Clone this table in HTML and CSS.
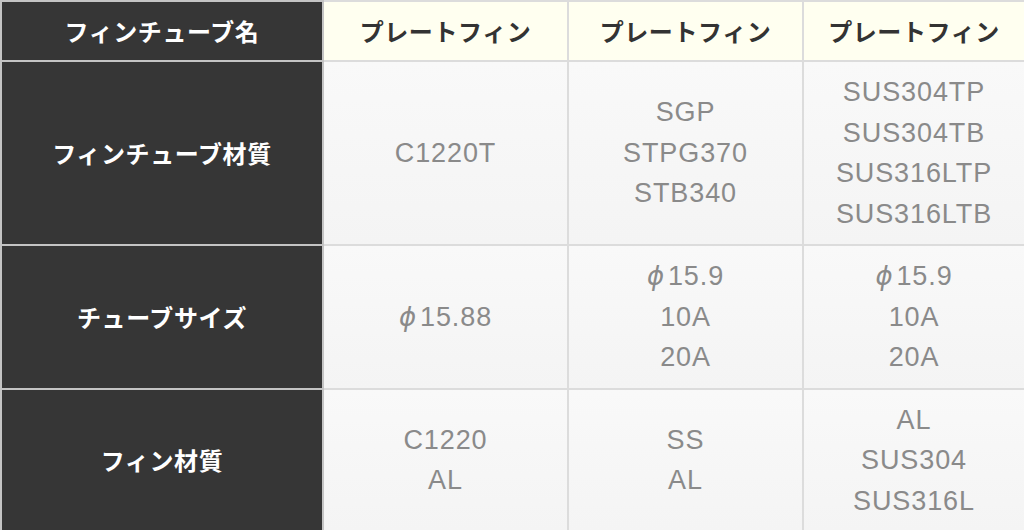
FILE: index.html
```html
<!DOCTYPE html>
<html lang="ja">
<head>
<meta charset="utf-8">
<title>フィンチューブ</title>
<link rel="stylesheet" href="styles.css">
</head>
<body>
<table class="spec">
  <colgroup>
    <col class="c1"><col class="c2"><col class="c3"><col class="c4">
  </colgroup>
  <thead>
    <tr class="head">
      <th class="label">フィンチューブ名</th>
      <th class="type">プレートフィン</th>
      <th class="type">プレートフィン</th>
      <th class="type">プレートフィン</th>
    </tr>
  </thead>
  <tbody>
    <tr>
      <th class="label">フィンチューブ材質</th>
      <td>C1220T</td>
      <td>SGP<br>STPG370<br>STB340</td>
      <td>SUS304TP<br>SUS304TB<br>SUS316LTP<br>SUS316LTB</td>
    </tr>
    <tr>
      <th class="label">チューブサイズ</th>
      <td><span class="phi">ϕ</span>15.88</td>
      <td><span class="phi">ϕ</span>15.9<br>10A<br>20A</td>
      <td><span class="phi">ϕ</span>15.9<br>10A<br>20A</td>
    </tr>
    <tr>
      <th class="label">フィン材質</th>
      <td>C1220<br>AL</td>
      <td>SS<br>AL</td>
      <td>AL<br>SUS304<br>SUS316L</td>
    </tr>
  </tbody>
</table>
</body>
</html>
```
FILE: styles.css
```css
html, body {
  margin: 0;
  padding: 0;
  background: #ffffff;
}

.spec {
  width: 1024px;
  border-collapse: collapse;
  table-layout: fixed;
}

.c1 { width: 322px; }
.c2 { width: 245px; }
.c3 { width: 235px; }
.c4 { width: 222px; }

.spec th,
.spec td {
  border: 2px solid #dcdcdc;
  text-align: center;
  vertical-align: middle;
}

.spec th {
  font-family: "Noto Sans CJK JP", sans-serif;
  font-weight: 700;
  font-size: 24px;
  letter-spacing: 0.6px;
  height: 58px;
  padding: 0;
  line-height: 30px;
}

.spec th.label {
  background: #363636;
  color: #ffffff;
  border-color: #c4c4c4;
}

.spec th.type {
  background: #fffff0;
  color: #333333;
}

.spec td {
  font-family: "Liberation Sans", "DejaVu Sans", "Noto Sans CJK JP", sans-serif;
  font-size: 27px;
  line-height: 40.5px;
  letter-spacing: 0.9px;
  color: #8a8a8a;
  background: linear-gradient(#f9f9f9, #f4f4f4);
  padding: 10px 4px;
}

.phi {
  font-family: "DejaVu Sans", sans-serif;
  font-style: italic;
  font-size: 26px;
  margin-right: 3px;
}

tbody tr:nth-child(1) { height: 183px; }
tbody tr:nth-child(2) { height: 142px; }
tbody tr:nth-child(3) { height: 141px; }
```
